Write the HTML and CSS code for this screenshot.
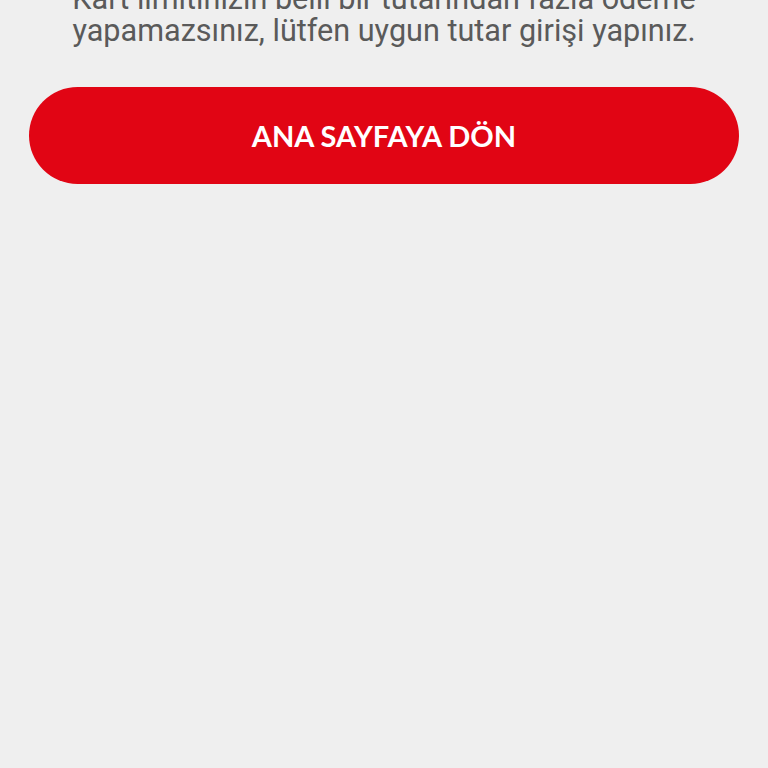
FILE: index.html
```html
<!DOCTYPE html>
<html lang="tr">
<head>
<meta charset="utf-8">
<link rel="stylesheet" href="styles.css">
</head>
<body>
<main class="page">
  <p class="message">Kart limitinizin belli bir tutarından fazla ödeme yapamazsınız, lütfen uygun tutar girişi yapınız.</p>
  <button class="primary-btn">ANA SAYFAYA DÖN</button>
</main>
</body>
</html>
```
FILE: styles.css
```css
html, body {
  margin: 0;
  padding: 0;
  background: #efefef;
  height: 100%;
}
.page {
  display: flex;
  flex-direction: column;
  align-items: stretch;
  padding: 0 29px;
}
.message {
  margin: -17px 40px 0;
  font-family: Roboto, "Liberation Sans", sans-serif;
  font-size: 30.6px;
  line-height: 32px;
  color: #5a5a5a;
  text-align: center;
}
.primary-btn {
  margin-top: 40px;
  height: 97px;
  border: none;
  border-radius: 49px;
  background: #e10514;
  color: #fff;
  font-family: Lato, "Open Sans", sans-serif;
  font-weight: 700;
  font-size: 29px;
  letter-spacing: 0;
  cursor: pointer;
}
```
